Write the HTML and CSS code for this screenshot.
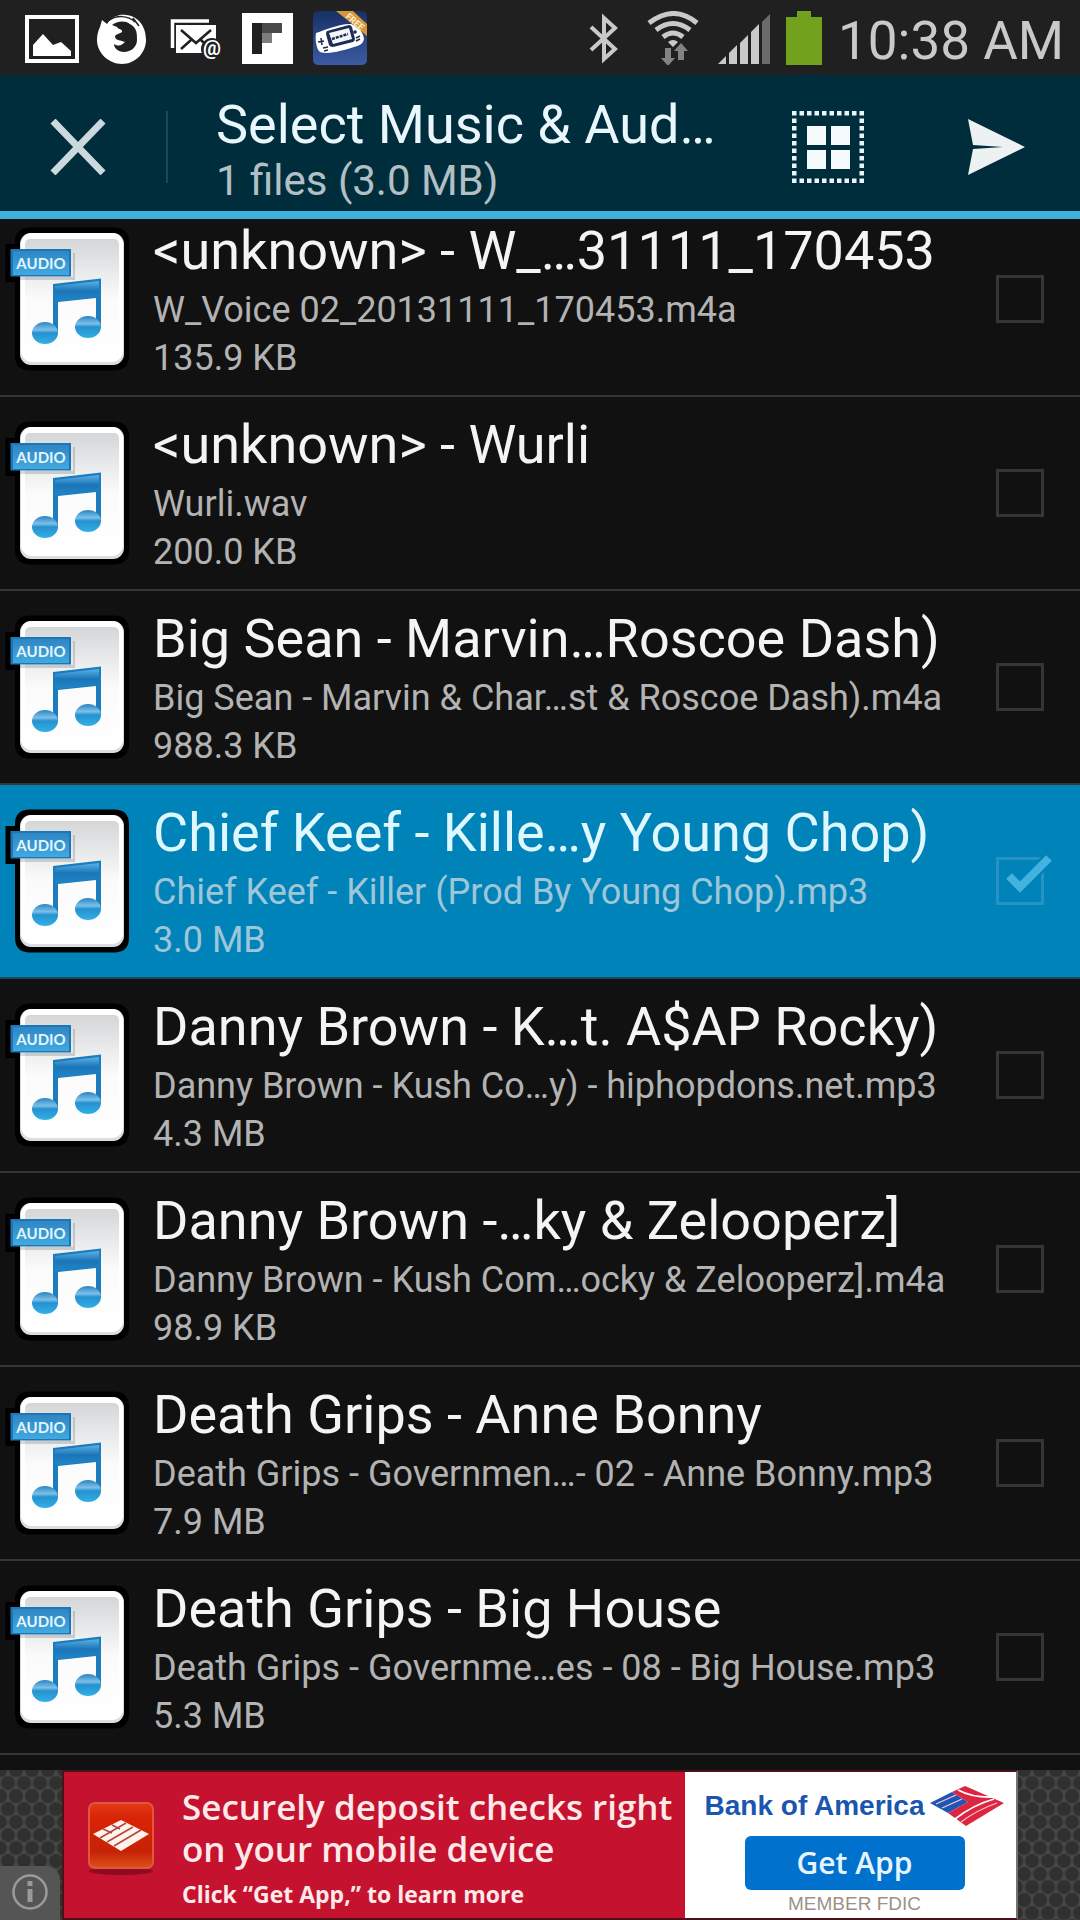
FILE: index.html
```html
<!DOCTYPE html>
<html lang="en">
<head>
  <meta charset="UTF-8">
  <meta name="viewport" content="width=device-width, initial-scale=1">
  <title>Select Music &amp; Audio</title>
  <link rel="stylesheet" href="styles.css">
</head>
<body>

<!-- shared icons -->
<svg class="sprite" aria-hidden="true">
  <defs>
    <linearGradient id="paper" x1="0" y1="0" x2="0" y2="1">
      <stop offset="0" stop-color="#d4d6d8"/>
      <stop offset="0.5" stop-color="#fbfbfb"/>
      <stop offset="1" stop-color="#ffffff"/>
    </linearGradient>
    <linearGradient id="label" x1="0" y1="0" x2="0" y2="1">
      <stop offset="0" stop-color="#2f86c4"/>
      <stop offset="1" stop-color="#41a9df"/>
    </linearGradient>
    <linearGradient id="beam" x1="0" y1="0" x2="0" y2="1">
      <stop offset="0" stop-color="#5bb2e4"/>
      <stop offset="0.5" stop-color="#1b75b8"/>
      <stop offset="1" stop-color="#1f86c8"/>
    </linearGradient>
    <linearGradient id="note" x1="0" y1="0" x2="0" y2="1">
      <stop offset="0" stop-color="#2a84c2"/>
      <stop offset="0.35" stop-color="#7cc0e8"/>
      <stop offset="0.5" stop-color="#2591cf"/>
      <stop offset="1" stop-color="#31b0e6"/>
    </linearGradient>
  </defs>
  <symbol id="audio" viewBox="0 0 144 144">
    <path d="M30 0.500h84q15 0 15 15v113q0 15-15 15H30q-15 0-15-15V55H5.500V17H15v-2q0-14.500 15-14.500z" fill="#000"/>
    <rect x="20" y="6" width="104" height="132" rx="11" fill="#dcdddf"/>
    <rect x="21" y="6" width="102" height="129" rx="11" fill="#fff"/>
    <rect x="25" y="12" width="94" height="121" rx="5" fill="url(#paper)"/>
    <path d="M20 50h53V26h2v27H20z" fill="#000" opacity="0.150"/>
    <rect x="10.500" y="22" width="60.500" height="27.500" fill="#1d76b5"/>
    <rect x="13" y="24" width="56" height="24" fill="url(#label)"/>
    <text x="41" y="42" class="audio-label">AUDIO</text>
    <path d="M53 57L101 51.500v49h-5V71l-38 4v31h-5z" fill="#1c7cbe"/>
    <path d="M55 59L99 54v15.500L55 74z" fill="url(#beam)"/>
    <ellipse cx="45" cy="106" rx="13" ry="11" fill="url(#note)"/>
    <ellipse cx="88" cy="100" rx="13" ry="11" fill="url(#note)"/>
  </symbol>
</svg>

<div class="status-bar">
  <svg class="status-icon" viewBox="0 0 54 54">
    <path d="M0 4h54v48H0zM4 8v40h46V8z" fill="#fff" fill-rule="evenodd"/>
    <path d="M8 45V34l10-11 10 11 8-3 10 9v5z" fill="#fff"/>
  </svg>
  <svg class="status-icon" viewBox="0 0 54 54">
    <path d="M5 9l5 4C15 5 23 3 29 4c12 1 20 11 20 25 0 13-11 24-24 24S0 42 0 29c0-5 1-9 3-13z" fill="#fff"/>
    <path d="M15 14c5-4 13-5 18-1 7 4 7 9 7 16 0 7-6 12-13 12-6 0-10-4-10-8 5 3 8 1 11-2-4-2-9-1-10-5 0-3 4-3 7-5 1-3-3-2-5-5z" fill="#202020"/>
    <path d="M11 10c8-6 20-6 27 1l-2-4 6 8" fill="none" stroke="#202020" stroke-width="1.500"/>
  </svg>
  <svg class="status-icon" viewBox="0 0 54 54">
    <path d="M3.500 37V10H40" fill="none" stroke="#fff" stroke-width="3.500"/>
    <path d="M7 14h40v28H7z" fill="#fff"/>
    <path d="M12 19l15 13L42 19M12 38l10-9M32 29l5 5" fill="none" stroke="#202020" stroke-width="2.500"/>
    <circle cx="43" cy="38" r="11" fill="#202020"/>
    <text x="43" y="44" class="mail-at">@</text>
  </svg>
  <svg class="status-icon" viewBox="0 0 54 54">
    <path d="M1 2h51v51H1z" fill="#fff"/>
    <path d="M11 12h10v31H11z" fill="#202020"/>
    <path d="M21 12h20v10H21z" fill="#4a4a4a"/>
    <path d="M21 22h10v10H21z" fill="#7d7d7d"/>
  </svg>
  <svg class="status-icon" viewBox="0 0 54 54">
    <defs>
      <linearGradient id="gba" x1="0" y1="0" x2="0" y2="1">
        <stop offset="0" stop-color="#173064"/>
        <stop offset="1" stop-color="#3c5ba3"/>
      </linearGradient>
      <clipPath id="gba-clip"><rect width="54" height="54" rx="5"/></clipPath>
    </defs>
    <g clip-path="url(#gba-clip)">
      <path d="M0 0h54v54H0z" fill="url(#gba)"/>
      <path d="M3 22c8-3 26-10 35-9 4 1 12 6 13 15-1 5-5 7-10 8-10 3-25 8-34 5-4-3-5-14-4-19z" fill="#fff"/>
      <path d="M14 20l22-6q2 0 3 2l3 12q0 2-2 3l-20 5q-3 0-4-2l-3-11q0-2 1-3z" fill="#1c2c55"/>
      <path d="M16 22l20-5 3 11-19 5z" fill="#f4f6fa"/>
      <path d="M19 28l16-5" stroke="#1c2c55" stroke-width="2.500" stroke-dasharray="3 1"/>
      <path d="M5 31l6-1M8 27l1 7M10 37l5-1M11 40l4-1M43 27l4-2M43 30l4-2" stroke="#1c2c55" stroke-width="1.600"/>
      <circle cx="42" cy="21" r="1.800" fill="#1c2c55"/>
      <path d="M23 0h17l14 13v12z" fill="#d6973a"/>
      <text x="0" y="0" class="free" transform="translate(40 13) rotate(41)">FREE</text>
    </g>
  </svg>

  <div class="status-right">
    <svg class="status-icon" viewBox="0 0 54 54">
      <path d="M15 16l24 22-11 10V7l11 10-24 22" fill="none" stroke="#c9c9c9" stroke-width="4"/>
    </svg>
    <svg class="status-icon" viewBox="0 0 54 54">
      <g fill="none" stroke="#c9c9c9" stroke-width="5">
        <path d="M3 12q25-19 48 0"/>
        <path d="M10 19q17-13 34 0"/>
        <path d="M17 26q10-8 20 0"/>
      </g>
      <path d="M22 31q5-4 10 0l-5 5z" fill="#c9c9c9"/>
      <path d="M19 37h6v10h4l-7 8-7-8h4zM32 49V40h-4l7-8 7 8h-4v9z" fill="#838383"/>
    </svg>
    <svg class="status-icon" viewBox="0 0 54 54">
      <path d="M2 53l8-8v8zM13 53V42l8-8v19zM24 53V32l8-8v29zM35 53V21l8-8v40z" fill="#c9c9c9"/>
      <path d="M46 53V11l8-8v50z" fill="#6b6b6b"/>
    </svg>
    <svg class="battery" viewBox="0 0 36 54">
      <path d="M11 0h14v6h11v48H0V6h11z" fill="#72a11d"/>
    </svg>
    <span class="clock">10:38 AM</span>
  </div>
</div>

<header class="action-bar">
  <button class="bar-button" aria-label="Close">
    <svg width="56" height="56" viewBox="0 0 56 56">
      <path d="M3 2l50 52M53 2L3 54" stroke="#cbd8dd" stroke-width="7"/>
    </svg>
  </button>
  <div class="divider"></div>
  <div class="heading">
    <h1>Select Music &amp; Aud…</h1>
    <p>1 files (3.0 MB)</p>
  </div>
  <button class="bar-button" aria-label="Select all">
    <svg width="72" height="72" viewBox="0 0 72 72">
      <path d="M0 2.250h72M0 69.750h72" stroke="#e9f5fa" stroke-width="4.500" stroke-dasharray="4.500 3"/>
      <path d="M2.250 7.500v60M69.750 7.500v60" stroke="#e9f5fa" stroke-width="4.500" stroke-dasharray="4.500 3"/>
      <path d="M15 15h19v19H15zM39 15h19v19H39zM15 39h19v19H15zM39 39h19v19H39z" fill="#f5fafc"/>
    </svg>
  </button>
  <button class="bar-button" aria-label="Send">
    <svg width="57" height="56" viewBox="0 0 57 56">
      <path d="M0 0l57 28L0 56l5-26 30-2-30-2z" fill="#eef1f2"/>
    </svg>
  </button>
</header>

<main class="scroller">
  <ul class="files">
    <li>
      <label class="file">
        <svg class="file-icon"><use href="#audio"/></svg>
        <span class="file-text">
          <span class="title">&lt;unknown&gt; - W_…31111_170453</span>
          <span class="name">W_Voice 02_20131111_170453.m4a</span>
          <span class="size">135.9 KB</span>
        </span>
        <span class="check"><input type="checkbox"></span>
      </label>
    </li>
    <li>
      <label class="file">
        <svg class="file-icon"><use href="#audio"/></svg>
        <span class="file-text">
          <span class="title">&lt;unknown&gt; - Wurli</span>
          <span class="name">Wurli.wav</span>
          <span class="size">200.0 KB</span>
        </span>
        <span class="check"><input type="checkbox"></span>
      </label>
    </li>
    <li>
      <label class="file">
        <svg class="file-icon"><use href="#audio"/></svg>
        <span class="file-text">
          <span class="title">Big Sean - Marvin…Roscoe Dash)</span>
          <span class="name">Big Sean - Marvin &amp; Char…st &amp; Roscoe Dash).m4a</span>
          <span class="size">988.3 KB</span>
        </span>
        <span class="check"><input type="checkbox"></span>
      </label>
    </li>
    <li>
      <label class="file selected">
        <svg class="file-icon"><use href="#audio"/></svg>
        <span class="file-text">
          <span class="title">Chief Keef - Kille…y Young Chop)</span>
          <span class="name">Chief Keef - Killer (Prod By Young Chop).mp3</span>
          <span class="size">3.0 MB</span>
        </span>
        <span class="check">
          <input type="checkbox" checked>
          <svg class="tick" viewBox="0 0 60 52">
            <path d="M13 23l11 11L53 5" fill="none" stroke="#0083b8" stroke-width="13"/>
            <path d="M13 23l11 11L53 5" fill="none" stroke="#43b2df" stroke-width="8"/>
          </svg>
        </span>
      </label>
    </li>
    <li>
      <label class="file">
        <svg class="file-icon"><use href="#audio"/></svg>
        <span class="file-text">
          <span class="title">Danny Brown - K…t. A$AP Rocky)</span>
          <span class="name">Danny Brown - Kush Co…y) - hiphopdons.net.mp3</span>
          <span class="size">4.3 MB</span>
        </span>
        <span class="check"><input type="checkbox"></span>
      </label>
    </li>
    <li>
      <label class="file">
        <svg class="file-icon"><use href="#audio"/></svg>
        <span class="file-text">
          <span class="title">Danny Brown -…ky &amp; Zelooperz]</span>
          <span class="name">Danny Brown - Kush Com…ocky &amp; Zelooperz].m4a</span>
          <span class="size">98.9 KB</span>
        </span>
        <span class="check"><input type="checkbox"></span>
      </label>
    </li>
    <li>
      <label class="file">
        <svg class="file-icon"><use href="#audio"/></svg>
        <span class="file-text">
          <span class="title">Death Grips - Anne Bonny</span>
          <span class="name">Death Grips - Governmen…- 02 - Anne Bonny.mp3</span>
          <span class="size">7.9 MB</span>
        </span>
        <span class="check"><input type="checkbox"></span>
      </label>
    </li>
    <li>
      <label class="file">
        <svg class="file-icon"><use href="#audio"/></svg>
        <span class="file-text">
          <span class="title">Death Grips - Big House</span>
          <span class="name">Death Grips - Governme…es - 08 - Big House.mp3</span>
          <span class="size">5.3 MB</span>
        </span>
        <span class="check"><input type="checkbox"></span>
      </label>
    </li>
  </ul>
</main>

<footer class="ad">
  <button class="ad-info" aria-label="About this ad">
    <svg width="36" height="36" viewBox="0 0 36 36">
      <circle cx="18" cy="18" r="16.500" fill="none" stroke="#9a9a9a" stroke-width="2.500"/>
      <path d="M15.500 7h5v5h-5zM15.500 15h5v13h-5z" fill="#9a9a9a"/>
    </svg>
  </button>
  <div class="banner">
    <div class="pitch">
      <svg class="app-icon" viewBox="0 0 66 74">
        <defs>
          <linearGradient id="app" x1="0" y1="0" x2="0" y2="1">
            <stop offset="0" stop-color="#e23a18"/>
            <stop offset="0.250" stop-color="#d92305"/>
            <stop offset="0.750" stop-color="#c62306"/>
            <stop offset="1" stop-color="#e0501c"/>
          </linearGradient>
        </defs>
        <ellipse cx="33" cy="69" rx="32" ry="4" fill="#8d0c22"/>
        <rect x="1" y="1" width="64" height="65" rx="6" fill="url(#app)" stroke="#e2573a" stroke-width="2"/>
        <path d="M5 32l28-14 28 14-28 17z" fill="#fff3ec"/>
        <path d="M12 36l26-15M19 40l26-15M26 44l27-16M15 27l9 4M24 23l8 4" stroke="#b5443a" stroke-width="1.500"/>
      </svg>
      <div class="pitch-text">
        <p class="offer">Securely deposit checks right<br>on your mobile device</p>
        <p class="hint">Click “Get App,” to learn more</p>
      </div>
    </div>
    <div class="brand">
      <div class="logo">
        <span>Bank of America</span>
        <svg width="74" height="40" viewBox="0 0 74 40">
          <path d="M0 17L22 6l16 10-20 11z" fill="#1f56b5"/>
          <path d="M22 6L35 0l39 17-38 23-18-13 20-11z" fill="#dc2540"/>
          <path d="M28 4q15 8 36 7M25 33q18-14 39-20" fill="none" stroke="#fff" stroke-width="1.800"/>
          <path d="M31 36q16-12 36-19M6 18l20-9M12 22l20-9" fill="none" stroke="#f6c9d2" stroke-width="1.200"/>
        </svg>
      </div>
      <button class="get-app">Get App</button>
      <small>MEMBER FDIC</small>
    </div>
  </div>
</footer>

</body>
</html>
```
FILE: styles.css
```css
* {
  box-sizing: border-box;
}

body {
  margin: 0;
  min-height: 100vh;
  display: flex;
  flex-direction: column;
  background-color: #111;
  color: white;
  font-family: Roboto, "Noto Sans", sans-serif;
}

h1, p, ul {
  margin: 0;
  padding: 0;
  font-weight: normal;
}

button {
  border: 0;
  padding: 0;
  background: none;
  color: inherit;
  font-family: inherit;
}

svg {
  display: block;
  flex-shrink: 0;
}

.sprite {
  position: absolute;
  width: 0;
  height: 0;
}

/* status bar */
.status-bar {
  height: 75px;
  padding: 0 16px 0 25px;
  display: flex;
  align-items: center;
  gap: 18px;
  background-color: #202020;
}

.status-icon {
  width: 54px;
  height: 54px;
}

.battery {
  width: 36px;
  height: 54px;
}

.status-right {
  margin-left: auto;
  display: flex;
  align-items: center;
  gap: 16px;
}

.clock {
  font-size: 53px;
  line-height: 72px;
  padding-top: 6px;
  color: #c9c9c9;
  white-space: nowrap;
}

.mail-at {
  font: bold 20px Roboto, sans-serif;
  fill: #fff;
  text-anchor: middle;
}

.free {
  font: bold 9px Roboto, sans-serif;
  fill: #fbeccb;
  text-anchor: middle;
}

/* action bar */
.action-bar {
  position: relative;
  z-index: 1;
  height: 144px;
  display: flex;
  align-items: center;
  background-color: #002d3b;
  box-shadow: inset 0 -8px #3fb0dd;
}

.bar-button {
  width: 168px;
  height: 100%;
  display: flex;
  align-items: center;
  justify-content: center;
}

.action-bar .bar-button:first-child {
  width: 156px;
}

.divider {
  width: 2px;
  height: 72px;
  margin: 0 48px 0 10px;
  background-color: #1f4653;
}

.heading {
  flex: 1;
  min-width: 0;
  padding-top: 2px;
  white-space: nowrap;
}

.heading h1 {
  font-size: 54px;
  line-height: 66px;
  color: #e9f6fb;
}

.heading p {
  font-size: 42px;
  line-height: 46px;
  color: #b2c0c5;
}

/* file list, scrolled a little under the action bar */
.scroller {
  flex: 1;
  overflow: hidden;
}

.files {
  list-style: none;
  margin-top: -16px;
}

.file {
  height: 194px;
  display: flex;
  align-items: center;
  padding-right: 36px;
  border-bottom: 2px solid #353535;
}

.file.selected {
  background-color: #0083b8;
  border-color: #17485c;
}

.file-icon {
  width: 144px;
  height: 144px;
}

.audio-label {
  font: bold 15px Lato, sans-serif;
  fill: #e4f5fd;
  text-anchor: middle;
}

.file-text {
  flex: 1;
  min-width: 0;
  padding-left: 9px;
  display: flex;
  flex-direction: column;
  white-space: nowrap;
}

.title {
  font-size: 54px;
  line-height: 70px;
  color: #f4f4f4;
}

.name, .size {
  font-size: 36px;
  line-height: 48px;
  color: #b3b3b3;
}

.selected .title {
  color: #dff7ff;
}

.selected .name,
.selected .size {
  color: #9fc6d8;
}

.check {
  position: relative;
  width: 48px;
  height: 48px;
}

.check input {
  appearance: none;
  display: block;
  width: 48px;
  height: 48px;
  margin: 0;
  border: 3px solid #353535;
}

.selected .check input {
  border-color: #2495c3;
}

.tick {
  position: absolute;
  left: 0;
  top: -4px;
  width: 60px;
  height: 52px;
}

/* ad */
.ad {
  position: relative;
  height: 150px;
  display: flex;
  justify-content: center;
  background-color: #484848;
  background-image:
    radial-gradient(circle, #303030 6px, transparent 8px),
    radial-gradient(circle, #303030 6px, transparent 8px);
  background-size: 16px 26px;
  background-position: 0 0, 8px 13px;
  font-family: "Open Sans", sans-serif;
}

.ad-info {
  position: absolute;
  left: 0;
  bottom: 0;
  width: 60px;
  height: 54px;
  padding-bottom: 2px;
  display: flex;
  align-items: center;
  justify-content: center;
  background-color: #555;
  border-top-right-radius: 14px;
}

.banner {
  width: 956px;
  max-width: 100%;
  display: flex;
  border: 2px solid #4b1018;
  border-right-color: #77736b;
  background-color: #c5122f;
}

.pitch {
  flex: 1;
  padding-left: 24px;
  display: flex;
  gap: 28px;
  white-space: nowrap;
}

.app-icon {
  width: 66px;
  height: 74px;
  margin-top: 30px;
}

.pitch-text {
  padding-top: 14px;
  color: #ffe9e9;
}

.offer {
  font-size: 35px;
  font-weight: 600;
  line-height: 42px;
}

.hint {
  font-size: 23px;
  font-weight: bold;
  line-height: 48px;
}

.brand {
  width: 331px;
  padding: 14px 0 0 8px;
  display: flex;
  flex-direction: column;
  align-items: center;
  background-color: #fff;
}

.logo {
  display: flex;
  align-items: center;
  gap: 6px;
  height: 50px;
  padding-bottom: 10px;
  color: #1a55b0;
  font-family: "Liberation Sans Narrow", "Liberation Sans", sans-serif;
  font-size: 28px;
  font-weight: bold;
  white-space: nowrap;
}

.get-app {
  width: 220px;
  height: 54px;
  border-radius: 6px;
  background-color: #0072ce;
  color: #e6f4ff;
  font-size: 30px;
  font-weight: 600;
  line-height: 54px;
}

.brand small {
  color: #9c9189;
  font-family: "Liberation Sans", sans-serif;
  font-size: 19px;
  line-height: 28px;
}
```
